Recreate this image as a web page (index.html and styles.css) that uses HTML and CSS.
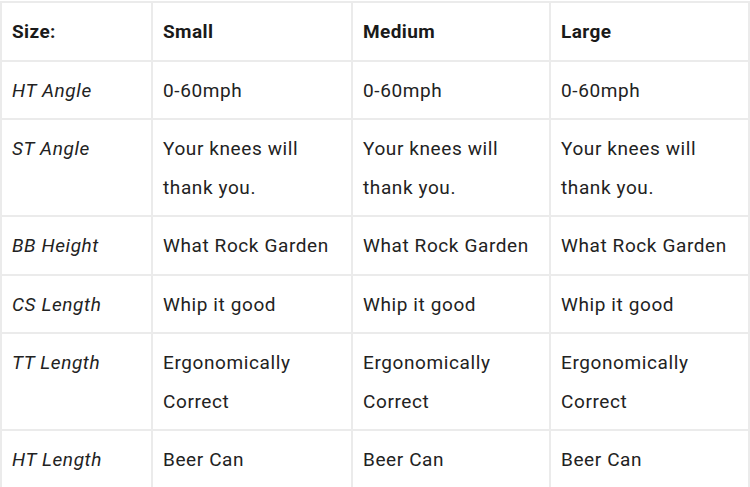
FILE: index.html
```html
<!DOCTYPE html>
<html>
<head>
<meta charset="utf-8">
<link rel="stylesheet" href="styles.css">
</head>
<body>
<table class="geo">
  <colgroup>
    <col class="c1"><col class="c2"><col class="c3"><col class="c4">
  </colgroup>
  <thead>
    <tr><th>Size:</th><th>Small</th><th>Medium</th><th>Large</th></tr>
  </thead>
  <tbody>
    <tr><td class="lbl">HT Angle</td><td>0-60mph</td><td>0-60mph</td><td>0-60mph</td></tr>
    <tr><td class="lbl">ST Angle</td><td>Your knees will thank you.</td><td>Your knees will thank you.</td><td>Your knees will thank you.</td></tr>
    <tr><td class="lbl">BB Height</td><td>What Rock Garden</td><td>What Rock Garden</td><td>What Rock Garden</td></tr>
    <tr><td class="lbl">CS Length</td><td>Whip it good</td><td>Whip it good</td><td>Whip it good</td></tr>
    <tr><td class="lbl">TT Length</td><td>Ergonomically Correct</td><td>Ergonomically Correct</td><td>Ergonomically Correct</td></tr>
    <tr><td class="lbl">HT Length</td><td>Beer Can</td><td>Beer Can</td><td>Beer Can</td></tr>
  </tbody>
</table>
</body>
</html>
```
FILE: styles.css
```css
html, body {
  margin: 0;
  padding: 0;
  background: #ffffff;
}
body {
  font-family: Roboto, "Liberation Sans", sans-serif;
  color: #222222;
}
.geo {
  border-collapse: collapse;
  table-layout: fixed;
  width: 748px;
  margin-top: 1px;
  font-size: 19px;
  letter-spacing: 0.6px;
  line-height: 38.5px;
}
.c1 { width: 151px; }
.c2 { width: 200px; }
.c3 { width: 198px; }
.c4 { width: 199px; }
.geo th, .geo td {
  border: 2px solid #ebebeb;
  padding: 10px 10px 8px;
  text-align: left;
  vertical-align: top;
}
.geo th {
  font-weight: 700;
  letter-spacing: 0.4px;
  color: #1a1a1a;
}
.geo td.lbl {
  font-style: italic;
}
```
